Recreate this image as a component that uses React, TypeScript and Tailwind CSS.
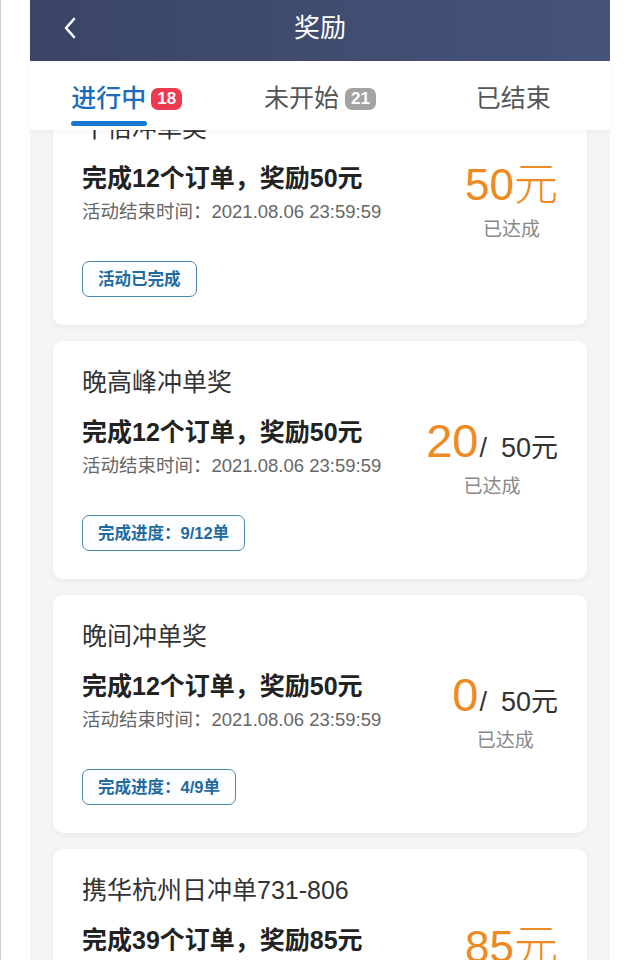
import React from "react";

type Reward = {
  title: string;
  goal: string;
  got?: string;
  total: string;
  badge: string;
};

const rewards: Reward[] = [
  { title: "十佰冲单奖", goal: "完成12个订单，奖励50元", total: "50", badge: "活动已完成" },
  { title: "晚高峰冲单奖", goal: "完成12个订单，奖励50元", got: "20", total: "50", badge: "完成进度：9/12单" },
  { title: "晚间冲单奖", goal: "完成12个订单，奖励50元", got: "0", total: "50", badge: "完成进度：4/9单" },
  { title: "携华杭州日冲单731-806", goal: "完成39个订单，奖励85元", total: "85", badge: "完成进度：12/39单" },
];

const font = "font-['Liberation_Sans','Noto_Sans_CJK_SC',sans-serif]";

function RewardCard({ r }: { r: Reward }) {
  return (
    <div className="flex rounded-[10px] bg-white px-[29px] pb-[28px] pt-[24px] shadow-[0_2px_6px_rgba(0,0,0,0.06)]">
      <div className="flex-1">
        <div className="text-[25px] leading-[35px] text-[#333]">{r.title}</div>
        <div className="mt-[15px] text-[25px] font-bold leading-[34px] text-[#222]">{r.goal}</div>
        <div className="mt-[5px] text-[18.5px] leading-[24px] text-[#666]">
          活动结束时间：2021.08.06 23:59:59
        </div>
        <div className="mt-[37px] inline-flex h-[36px] items-center rounded-[7px] border-[1.5px] border-[#4b87a9] bg-[#fbfdff] px-[15px] text-[16.5px] font-bold text-[#1f6ba0]">
          {r.badge}
        </div>
      </div>
      <div className="flex flex-col items-center pt-[52px]">
        {r.got !== undefined ? (
          <div className="flex items-baseline leading-none">
            <span className="text-[47px] font-light text-[#ee8a22]">{r.got}</span>
            <span className="ml-[1px] text-[27px] text-[#333]">/</span>
            <span className="ml-[14px] text-[27px] text-[#333]">{r.total}元</span>
          </div>
        ) : (
          <div className="text-[44px] font-light leading-none text-[#ee8a22]">{r.total}元</div>
        )}
        <div className="mt-[10px] text-[19px] leading-[26px] text-[#888]">已达成</div>
      </div>
    </div>
  );
}

export default function App() {
  return (
    <div className={`h-[960px] w-full overflow-hidden border-l border-[#cfcfcf] bg-white ${font}`}>
      <div className="ml-[29px] flex h-full w-[580px] flex-col bg-[#f4f5f7]">
        <div className="relative flex h-[61px] shrink-0 items-center justify-center bg-gradient-to-r from-[#3a4566] to-[#46537a]">
          <svg
            className="absolute left-[32px] top-[16px]"
            width="16"
            height="24"
            viewBox="0 0 16 24"
            fill="none"
            stroke="white"
            strokeWidth="2.6"
            strokeLinecap="round"
            strokeLinejoin="round"
          >
            <polyline points="12,3 4,12 12,21" />
          </svg>
          <span className="-mt-[4px] text-[26px] text-white">奖励</span>
        </div>

        <div className="relative z-10 grid h-[69px] shrink-0 grid-cols-3 bg-white shadow-[0_2px_4px_rgba(0,0,0,0.04)]">
          <div className="relative flex items-center justify-center pt-[6px]">
            <div className="relative flex items-center">
              <span className="text-[25px] font-medium text-[#1b6dbb]">进行中</span>
              <span className="ml-[5px] flex h-[22px] items-center rounded-[7px] bg-[#ee3a4e] px-[6px] text-[17px] font-bold text-white">
                18
              </span>
              <div className="absolute left-0 top-[41px] h-[5px] w-[76px] rounded-full bg-[#1877d3]" />
            </div>
          </div>
          <div className="flex items-center justify-center pt-[6px]">
            <span className="text-[25px] text-[#555]">未开始</span>
            <span className="ml-[6px] flex h-[22px] items-center rounded-[7px] bg-[#a3a3a3] px-[6px] text-[17px] font-bold text-white">
              21
            </span>
          </div>
          <div className="flex items-center justify-center pt-[6px]">
            <span className="text-[25px] text-[#555]">已结束</span>
          </div>
        </div>

        <div className="flex-1 overflow-hidden">
          <div className="-mt-[43px] flex flex-col gap-[16px] px-[23px]">
            {rewards.map((r) => (
              <RewardCard key={r.title} r={r} />
            ))}
          </div>
        </div>
      </div>
    </div>
  );
}
